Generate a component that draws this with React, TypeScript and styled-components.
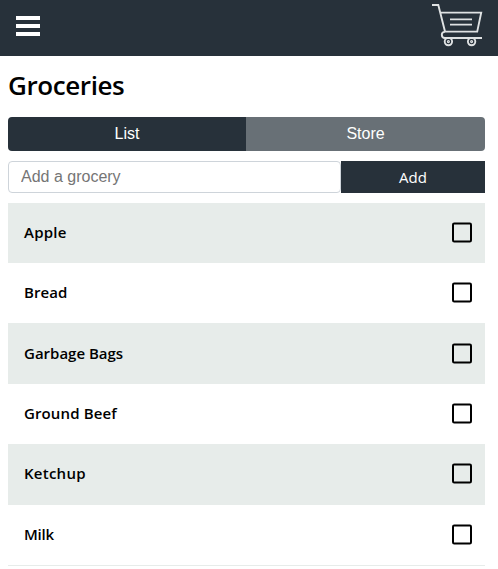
import React from "react";
import styled, { createGlobalStyle } from "styled-components";

const GlobalStyle = createGlobalStyle`
  * { box-sizing: border-box; }
  html, body { margin: 0; background: #fff; overflow: hidden; }
  body { font-family: "Trebuchet MS", "Open Sans", sans-serif; color: #000; }
`;

const Header = styled.header`
  display: flex;
  justify-content: space-between;
  align-items: flex-start;
  height: 56px;
  background: #27313a;
`;

const MenuButton = styled.button`
  display: flex;
  flex-direction: column;
  gap: 4px;
  margin: 16px 0 0 16px;
  padding: 0;
  border: 0;
  background: none;
`;

const MenuBar = styled.span`
  width: 24px;
  height: 4px;
  background: #fff;
`;

const Cart = styled.svg`
  width: 54px;
  height: 50px;
  margin-right: 14px;
  fill: none;
  stroke: #dfe2e3;
  stroke-width: 1.9;
`;

const Main = styled.main`
  width: 477px;
  margin-left: 8px;
`;

const Title = styled.h1`
  height: 61px;
  margin: 0;
  font-size: 26px;
  font-weight: 600;
  line-height: 58px;
  letter-spacing: -0.4px;
`;

const Tabs = styled.div`
  display: flex;
  height: 34px;
  border-radius: 4px;
  overflow: hidden;
`;

const Tab = styled.button<{ $active?: boolean }>`
  flex: ${(p) => (p.$active ? "0 0 238px" : "1")};
  padding: 0;
  border: 0;
  background: ${(p) => (p.$active ? "#27313a" : "#687076")};
  color: #fff;
  font: 16px/34px "Liberation Sans", Arial, sans-serif;
`;

const AddForm = styled.div`
  display: flex;
  height: 32px;
  margin: 10px 0 9.8px;
`;

const GroceryInput = styled.input`
  width: 333px;
  padding: 0 12px;
  border: 1px solid #ced4da;
  border-radius: 4px;
  outline: 0;
  font: 16px "Liberation Sans", Arial, sans-serif;
  &::placeholder { color: #757575; opacity: 1; }
`;

const AddButton = styled.button`
  flex: 1;
  padding: 0;
  border: 0;
  background: #27313a;
  color: #fff;
  font: 15px/32px "Trebuchet MS", "Open Sans", sans-serif;
`;

const List = styled.ul`
  margin: 0;
  padding: 0;
  list-style: none;
  border-bottom: 1px solid #e7ecea;
`;

const Row = styled.li`
  display: flex;
  align-items: center;
  justify-content: space-between;
  height: 60.35px;
  padding: 0 13px 0 16px;
  font-size: 15px;
  font-weight: 600;
  &:nth-child(odd) { background: #e7ecea; }
`;

const ItemName = styled.span<{ $tracking: number }>`
  margin-bottom: 2px;
  letter-spacing: ${(p) => p.$tracking}px;
`;

const Checkbox = styled.svg`
  width: 20px;
  height: 21px;
  margin-bottom: 1px;
  fill: none;
  stroke: #000;
  stroke-width: 2;
`;

const items = [
  { name: "Apple", tracking: 0.25 },
  { name: "Bread", tracking: 0.05 },
  { name: "Garbage Bags", tracking: 0 },
  { name: "Ground Beef", tracking: 0.12 },
  { name: "Ketchup", tracking: 0.25 },
  { name: "Milk", tracking: -0.2 },
];

export default function App() {
  return (
    <>
      <GlobalStyle />
      <Header>
        <MenuButton aria-label="Menu">
          <MenuBar />
          <MenuBar />
          <MenuBar />
        </MenuButton>
        <Cart viewBox="0 0 54 50" aria-label="Cart">
          <path d="M2 5h6.3L15 31.6h32.2L51.2 12.6H10.6" />
          <path d="M20 19.4h22M20 24.6h22" />
          <path d="M15 31.6c-2.6.2-3.2 1.7-3.2 3.2 0 2.4 1 3.2 3 3.2H52" />
          <circle cx="18.4" cy="41.6" r="3.7" />
          <circle cx="41.6" cy="41.6" r="3.7" />
          <circle cx="18.4" cy="41.6" r=".6" />
          <circle cx="41.6" cy="41.6" r=".6" />
        </Cart>
      </Header>
      <Main>
        <Title>Groceries</Title>
        <Tabs>
          <Tab $active>List</Tab>
          <Tab>Store</Tab>
        </Tabs>
        <AddForm>
          <GroceryInput placeholder="Add a grocery" />
          <AddButton>Add</AddButton>
        </AddForm>
        <List>
          {items.map((item) => (
            <Row key={item.name}>
              <ItemName $tracking={item.tracking}>{item.name}</ItemName>
              <Checkbox viewBox="0 0 20 21">
                <rect x="1" y="1.5" width="18" height="18" rx="1.2" />
              </Checkbox>
            </Row>
          ))}
        </List>
      </Main>
    </>
  );
}
